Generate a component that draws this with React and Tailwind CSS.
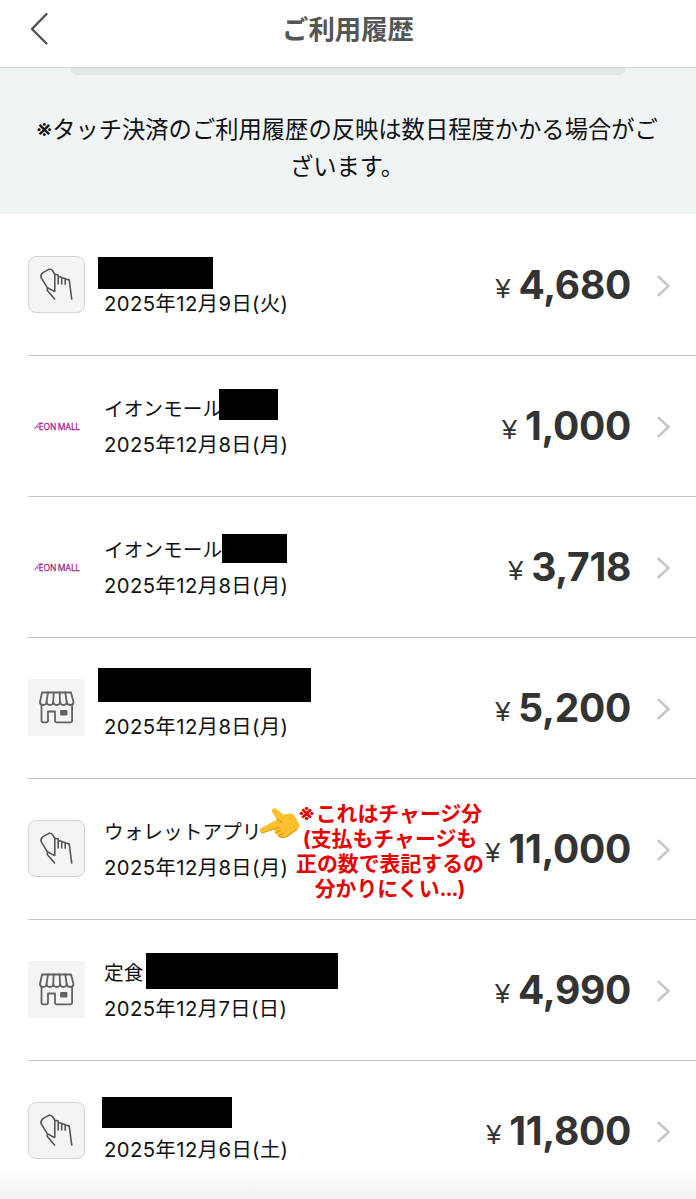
const transactions = [
  { icon: "touch", name: "", date: "2025年12月9日(火)", amount: "4,680", mask: "left-[70px] top-[42px] w-[115px] h-[32px]" },
  { icon: "aeon", name: "イオンモール", date: "2025年12月8日(月)", amount: "1,000", mask: "left-[191px] top-[33px] w-[59px] h-[31px]" },
  { icon: "aeon", name: "イオンモール", date: "2025年12月8日(月)", amount: "3,718", mask: "left-[194px] top-[37px] w-[65px] h-[29px]" },
  { icon: "shop", name: "", date: "2025年12月8日(月)", amount: "5,200", mask: "left-[70px] top-[30px] w-[213px] h-[34px]" },
  { icon: "touch", name: "ウォレットアプリ", date: "2025年12月8日(月)", amount: "11,000", note: true },
  { icon: "shop", name: "定食", date: "2025年12月7日(日)", amount: "4,990", mask: "left-[118px] top-[33px] w-[192px] h-[36px]" },
  { icon: "touch", name: "", date: "2025年12月6日(土)", amount: "11,800", mask: "left-[74px] top-[36px] w-[130px] h-[31px]" },
];

export default function App() {
  return (
    <div className="relative h-[1199px] w-[696px] overflow-hidden bg-white font-['Inter','Noto_Sans_CJK_JP',sans-serif] text-[#111]">
      <header className="grid h-[68px] grid-cols-[80px_1fr_80px] border-b border-[#d5d8da]">
        <svg className="ml-[30px] mt-[12px] h-[34px] w-[20px]" viewBox="0 0 20 34" fill="none" stroke="#505050" strokeWidth="2.4" strokeLinecap="round" strokeLinejoin="round">
          <path d="M16.5 2 2 17l14.5 14.5" />
        </svg>
        <h1 className="pt-[9px] text-center text-[26.4px] leading-[40px] font-bold text-[#555]">ご利用履歴</h1>
      </header>

      <section className="h-[146px] bg-[#f0f4f5]">
        <div className="mx-auto h-[7px] w-[556px] rounded-b-[8px] bg-[#e3e7e8]" />
        <p className="pt-[36px] pr-[2px] text-center text-[23.3px] leading-[37px] whitespace-nowrap">
          <span className="text-[25px] leading-none">※</span>タッチ決済のご利用履歴の反映は数日程度かかる場合がご
          <br />
          ざいます。
        </p>
      </section>

      <ul className="pt-px">
        {transactions.map((t, i) => (
          <Row key={i} {...t} />
        ))}
      </ul>

      {/* Fade above the bottom bar */}
      <div className="absolute inset-x-0 bottom-0 h-[30px] bg-gradient-to-b from-transparent to-black/6" />
    </div>
  );
}

function Row({ icon, name, date, amount, mask, note }) {
  return (
    <li className="relative ml-7 flex h-[141px] items-center border-b border-[#c8c8c8]">
      <Thumb icon={icon} />
      <div className="ml-[19px] flex-1 pt-px text-[20.3px] leading-[36px]">
        <div className="h-[36px] text-[19.7px]">{name}</div>
        <div className="tracking-[0.42px] whitespace-nowrap">{date}</div>
      </div>
      <div className="flex items-baseline pt-[4px] text-[#333]">
        <span className="mr-[8px] -translate-y-px font-['Liberation_Sans',sans-serif] text-[27px] leading-[40px]">¥</span>
        <span className="text-[39px] leading-[40px] font-bold tracking-[-0.3px]">{amount}</span>
      </div>
      <svg className="mr-[25px] ml-[25px] mt-[2px] h-[22px] w-[15px]" viewBox="0 0 15 22" fill="none" stroke="#c8c8c8" strokeWidth="2.6" strokeLinecap="round" strokeLinejoin="round">
        <path d="m2.5 1.8 10 9.2-10 9.2" />
      </svg>
      {mask && <div className={`absolute bg-black ${mask}`} />}
      {note && <Note />}
    </li>
  );
}

function Thumb({ icon }) {
  if (icon === "aeon") {
    return (
      <div className="flex size-[57px] items-center justify-center">
        <svg width="47" height="12" viewBox="0 0 47 12" fill="#a5248c" stroke="#a5248c" fontFamily="Open Sans, sans-serif" fontSize="9.2">
          <path d="M1.3 9.2 6.2 3.1H8M3.5 7H7" fill="none" strokeWidth=".9" />
          <text x="5.8" y="9.5" textLength="17.5" lengthAdjust="spacingAndGlyphs" strokeWidth=".3">EON</text>
          <text x="24.8" y="9.5" textLength="22" lengthAdjust="spacingAndGlyphs" strokeWidth=".3">MALL</text>
        </svg>
      </div>
    );
  }
  if (icon === "shop") {
    return (
      <div className="-mt-[2px] size-[57px] bg-[#f2f4f6]">
        <svg viewBox="0 0 57 57" fill="none" stroke="#606264" strokeWidth="1.8" strokeLinejoin="round" strokeLinecap="round">
          <path d="M14 13.5h29l2.5 9.5c0 4-6.5 4-6.7 0-.3 4-6.4 4-6.7 0-.3 4-6.5 4-6.8 0-.3 4-6.4 4-6.7 0-.3 4-6.6 4-6.6 0z" />
          <path d="m20 13.5-1.5 9.5M25.7 13.5 25.2 23M31.7 13.5 32 23M37.3 13.5l1.4 9.5" />
          <path d="M13.5 26v15.5q0 1.8 1.8 1.8h2.9q1.8 0 1.8-1.8v-9h7v9q0 1.8 1.8 1.8h13.5q1.8 0 1.8-1.8V26" />
          <rect x="33" y="32" width="5.5" height="3.5" fill="#606264" />
        </svg>
      </div>
    );
  }
  return (
    <div className="-mt-px size-[57px] overflow-hidden rounded-[8px] border border-[#d2d5d8] bg-[#f2f4f6]">
      <svg viewBox="1 1 55 55" fill="none" stroke="#555" strokeWidth="1.6" strokeLinejoin="round">
        <path d="M26.8 35.8V18.3L24.8 15Q23.2 12.8 20.8 13.4L15 16.6Q12.3 18.7 13.1 21.6L19.3 31.6 26.8 35.8M19.3 31.4V34.6L27 43.6" />
        <path d="M26.8 18.3 30.2 19V28.6M30.2 20.4 33.7 21.3V28.4M33.7 21.7 37.2 22.5V28.8M37.2 23 41.2 23.9 43.8 43.6" />
      </svg>
    </div>
  );
}

function Note() {
  return (
    <>
      <svg className="absolute left-[231px] top-[27px] h-[34px] w-[43px]" viewBox="0 0 43 34">
        <path d="M1.2 25.8C.2 24.2.8 22.8 2.6 21.8L18 13.6 13.6 7C11.8 3.6 14.4.8 17.2 2.8L23.6 8.2C26 9 29.5 7 32.8 7.6 35.2 8.4 36.8 11.6 38.2 14.6L40.6 19.2C41 20.8 39.8 22 38 23.2L28.5 30.2C25.5 32 22 31.8 19.6 30 17.2 28.2 15 26.4 15.6 22.9L4.2 27C2.9 27.4 1.9 27 1.2 25.8Z" fill="#fcc02c" />
        <path d="M15.6 22.9 19.8 21.2M16.4 26.8 21.6 24.2M19.6 30 24.4 27M18 13.6C20.2 13.6 21.6 14.6 22.2 16.4M3 27.1 15.4 22.9M19.6 30C22 31.8 25.5 32 28.5 30.2L38 23.2" fill="none" stroke="#e09a18" strokeWidth="1.1" strokeLinecap="round" />
      </svg>
      <p className="absolute left-[262px] top-[22px] w-[200px] text-center text-[20.9px] leading-[25px] font-bold whitespace-nowrap text-[#e60000]">
        <span className="text-[22px] leading-none">※</span>これはチャージ分
        <br />
        (支払もチャージも
        <br />
        正の数で表記するの
        <br />
        分かりにくい<span className="tracking-[-1px]">...</span>)
      </p>
    </>
  );
}
